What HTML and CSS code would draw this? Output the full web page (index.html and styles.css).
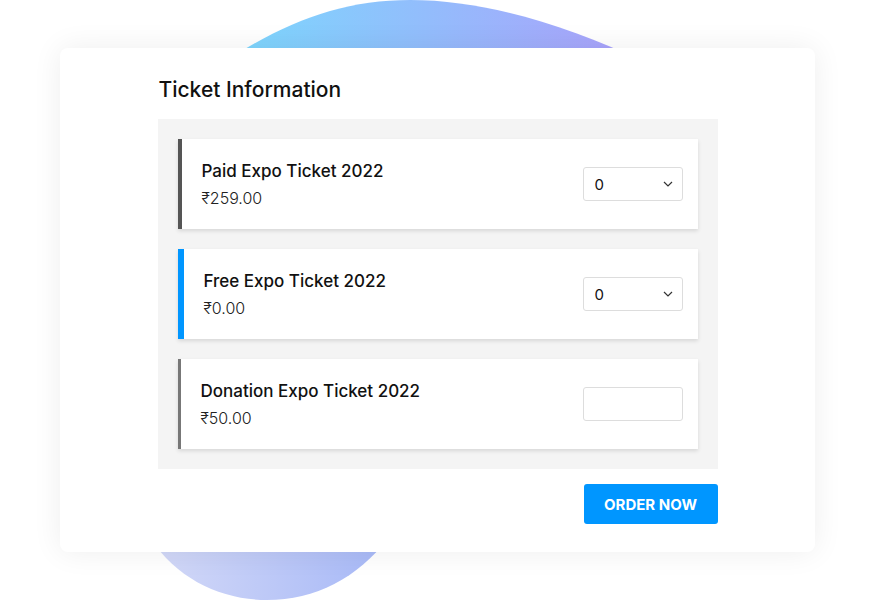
FILE: index.html
```html
<!DOCTYPE html>
<html lang="en">
  <head>
    <meta charset="UTF-8" />
    <meta name="viewport" content="width=device-width, initial-scale=1.0" />
    <title>Ticket Information</title>
    <link rel="stylesheet" href="styles.css">
  </head>
  <body>
    <div class="stage">
      <!-- baggrunds-blob bag kortet -->
      <svg class="blob" viewBox="0 0 875 600" width="875" height="600" aria-hidden="true">
        <defs>
          <linearGradient id="blobTop" x1="240" y1="0" x2="615" y2="0" gradientUnits="userSpaceOnUse">
            <stop offset="0" stop-color="#7dd6fd" />
            <stop offset="1" stop-color="#a9a3fb" />
          </linearGradient>
          <linearGradient id="blobBund" x1="158" y1="0" x2="375" y2="0" gradientUnits="userSpaceOnUse">
            <stop offset="0" stop-color="#d2d8f7" />
            <stop offset="1" stop-color="#a9baf7" />
          </linearGradient>
        </defs>
        <path d="M 230 58 C 290 20, 345 0, 410 0 C 485 0, 565 25, 645 62 L 645 120 L 230 120 Z" fill="url(#blobTop)" />
        <path d="M 150 538 C 178 580, 222 600, 267 600 C 315 600, 358 578, 388 538 Z" fill="url(#blobBund)" />
      </svg>

      <section class="card">
        <div class="inner">
          <h1>Ticket Information</h1>
          <div class="panel">
            <article class="ticket paid">
              <div class="txt">
                <h2>Paid Expo Ticket 2022</h2>
                <p>₹259.00</p>
              </div>
              <div class="select">
                <span>0</span>
                <svg width="10" height="6" viewBox="0 0 10 6"><path d="M1 1 L5 5 L9 1" fill="none" stroke="#333" stroke-width="1.2" /></svg>
              </div>
            </article>
            <article class="ticket free">
              <div class="txt">
                <h2>Free Expo Ticket 2022</h2>
                <p>₹0.00</p>
              </div>
              <div class="select">
                <span>0</span>
                <svg width="10" height="6" viewBox="0 0 10 6"><path d="M1 1 L5 5 L9 1" fill="none" stroke="#333" stroke-width="1.2" /></svg>
              </div>
            </article>
            <article class="ticket donation">
              <div class="txt">
                <h2>Donation Expo Ticket 2022</h2>
                <p>₹50.00</p>
              </div>
              <div class="select"></div>
            </article>
          </div>
          <div class="actions">
            <button class="order">ORDER NOW</button>
          </div>
        </div>
      </section>
    </div>
  </body>
</html>
```

FILE: styles.css
```css
body {
  margin: 0;
  background: #fff;
  font-family: "Inter", "Open Sans", sans-serif;
  color: #111;
}

.stage {
  position: relative;
  width: 875px;
  height: 600px;
  padding: 48px 0 0 60px;
  box-sizing: border-box;
  overflow: hidden;
}

.blob {
  position: absolute;
  left: 0;
  top: 0;
}

.card {
  position: relative;
  width: 755px;
  height: 504px;
  background: #fff;
  border-radius: 8px;
  box-shadow: 0 0 30px rgba(0, 0, 0, 0.07);
  box-sizing: border-box;
  padding-top: 27px;
}

.inner {
  width: 560px;
  margin: 0 auto;
}

h1 {
  margin: 0 0 14px 1px;
  font-size: 21px;
  font-weight: 500;
  line-height: 30px;
  color: #111;
}

.panel {
  background: #f4f4f4;
  padding: 20px;
  display: flex;
  flex-direction: column;
  gap: 20px;
}

.ticket {
  height: 90px;
  background: #fff;
  display: flex;
  align-items: center;
  justify-content: space-between;
  padding: 0 15px 0 20px;
  box-shadow: 0 2px 4px rgba(0, 0, 0, 0.12);
}

.paid {
  border-left: 4px solid #555;
}

.free {
  border-left: 6px solid #0096ff;
}

.donation {
  border-left: 3px solid #777;
}

.txt h2 {
  margin: 0 0 4px;
  font-size: 17px;
  font-weight: 500;
  line-height: 24px;
  color: #111;
}

.txt p {
  margin: 0;
  font-size: 16px;
  font-weight: 300;
  line-height: 22px;
  color: #222;
}

.select {
  width: 100px;
  height: 34px;
  box-sizing: border-box;
  border: 1px solid #ddd;
  border-radius: 3px;
  display: flex;
  align-items: center;
  justify-content: space-between;
  padding: 0 9px 0 11px;
  font-size: 15px;
  color: #111;
}

.actions {
  display: flex;
  justify-content: flex-end;
  padding-top: 15px;
}

.order {
  width: 134px;
  height: 40px;
  border: none;
  border-radius: 3px;
  background: #0096ff;
  color: #fff;
  font-family: inherit;
  font-size: 15px;
  font-weight: 700;
  cursor: pointer;
}
```
